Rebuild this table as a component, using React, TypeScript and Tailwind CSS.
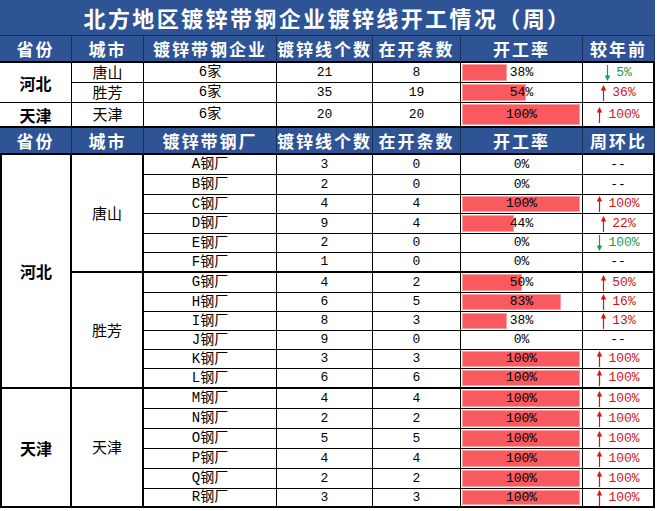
import React from "react";

type Dir = "up" | "down" | "none";

const CJK = "font-['Noto_Sans_CJK_SC',sans-serif]";
const MONO = "font-['Liberation_Mono','Noto_Sans_CJK_SC',monospace]";

function Arrow({ dir }: { dir: "up" | "down" }) {
  const color = dir === "up" ? "#e01010" : "#1f9a45";
  return (
    <svg width="7" height="16" viewBox="0 0 7 16" className="mr-[5px]">
      {dir === "up" ? (
        <>
          <line x1="3.5" y1="3" x2="3.5" y2="16" stroke={color} strokeWidth="1.2" />
          <polygon points="0.8,5.5 3.5,0 6.2,5.5" fill={color} />
        </>
      ) : (
        <>
          <line x1="3.5" y1="0" x2="3.5" y2="13" stroke={color} strokeWidth="1.2" />
          <polygon points="0.8,10.5 3.5,16 6.2,10.5" fill={color} />
        </>
      )}
    </svg>
  );
}

const cellBase = "flex items-center justify-center border-r border-black";

function Hdr({ children, last }: { children: React.ReactNode; last?: boolean }) {
  return (
    <div
      className={`flex items-center justify-center bg-[#2f5496] text-white font-bold text-[17px] tracking-[2px] ${CJK} border-b-2 border-black ${
        last ? "border-r border-r-[#1f3864]" : "border-r border-r-[#1c2f57]"
      }`}
    >
      {children}
    </div>
  );
}

function Rate({ pct, bottom }: { pct: number; bottom: string }) {
  const w = Math.min(118, Math.round(pct * 1.19));
  return (
    <div className={`relative ${cellBase} ${bottom}`}>
      {pct > 0 && (
        <div
          className="absolute left-[1px] top-[1px] bottom-[1px] bg-[#f95a5f] border border-[#ff9c9c]"
          style={{ width: `${w}px` }}
        />
      )}
      <span className={`relative text-[13px] text-black ${MONO}`}>{pct}%</span>
    </div>
  );
}

function Chg({ dir, val, bottom }: { dir: Dir; val: string; bottom: string }) {
  return (
    <div className={`${cellBase} border-r-2 ${bottom}`}>
      {dir === "none" ? (
        <span className={`text-[13px] text-black ${MONO}`}>--</span>
      ) : (
        <span className="flex items-center">
          <Arrow dir={dir} />
          <span
            className={`text-[13px] ${MONO} ${dir === "up" ? "text-[#d01515]" : "text-[#1f9a45]"}`}
          >
            {val}
          </span>
        </span>
      )}
    </div>
  );
}

type Row = { name: string; lines: number; open: number; pct: number; dir: Dir; val: string };

const rows2: Row[] = [
  { name: "A钢厂", lines: 3, open: 0, pct: 0, dir: "none", val: "" },
  { name: "B钢厂", lines: 2, open: 0, pct: 0, dir: "none", val: "" },
  { name: "C钢厂", lines: 4, open: 4, pct: 100, dir: "up", val: "100%" },
  { name: "D钢厂", lines: 9, open: 4, pct: 44, dir: "up", val: "22%" },
  { name: "E钢厂", lines: 2, open: 0, pct: 0, dir: "down", val: "100%" },
  { name: "F钢厂", lines: 1, open: 0, pct: 0, dir: "none", val: "" },
  { name: "G钢厂", lines: 4, open: 2, pct: 50, dir: "up", val: "50%" },
  { name: "H钢厂", lines: 6, open: 5, pct: 83, dir: "up", val: "16%" },
  { name: "I钢厂", lines: 8, open: 3, pct: 38, dir: "up", val: "13%" },
  { name: "J钢厂", lines: 9, open: 0, pct: 0, dir: "none", val: "" },
  { name: "K钢厂", lines: 3, open: 3, pct: 100, dir: "up", val: "100%" },
  { name: "L钢厂", lines: 6, open: 6, pct: 100, dir: "up", val: "100%" },
  { name: "M钢厂", lines: 4, open: 4, pct: 100, dir: "up", val: "100%" },
  { name: "N钢厂", lines: 2, open: 2, pct: 100, dir: "up", val: "100%" },
  { name: "O钢厂", lines: 5, open: 5, pct: 100, dir: "up", val: "100%" },
  { name: "P钢厂", lines: 4, open: 4, pct: 100, dir: "up", val: "100%" },
  { name: "Q钢厂", lines: 2, open: 2, pct: 100, dir: "up", val: "100%" },
  { name: "R钢厂", lines: 3, open: 3, pct: 100, dir: "up", val: "100%" },
];

function DataRow({ r, thick }: { r: Row; thick: boolean }) {
  const bottom = thick ? "border-b-2" : "border-b";
  return (
    <>
      <div className={`${cellBase} ${bottom} text-[14px] text-black ${MONO}`}>{r.name}</div>
      <div className={`${cellBase} ${bottom} text-[13px] text-black ${MONO}`}>{r.lines}</div>
      <div className={`${cellBase} ${bottom} text-[13px] text-black ${MONO}`}>{r.open}</div>
      <Rate pct={r.pct} bottom={bottom} />
      <Chg dir={r.dir} val={r.val} bottom={bottom} />
    </>
  );
}

export default function App() {
  const cityText = `text-[15px] text-black ${CJK}`;
  const provText = `text-[16px] font-bold text-black ${CJK}`;
  return (
    <div className="w-[657px] h-[511px] bg-white">
      <div className="w-[655px] grid grid-cols-[72px_72px_133px_96px_88px_122px_72px] grid-rows-[36px_27px_20px_20px_25px_27px_20px_20px_19px_20px_19px_20px_20px_19px_19px_19px_19px_20px_20px_20px_20px_20px_20px_19px]">
        {/* Title */}
        <div
          className={`col-span-7 flex items-center justify-center bg-[#2f5496] text-white text-[22px] font-bold tracking-[2.4px] ${CJK} border-b border-[#1c2f57]`}
        >
          北方地区镀锌带钢企业镀锌线开工情况（周）
        </div>

        {/* Header 1 */}
        <Hdr>省份</Hdr>
        <Hdr>城市</Hdr>
        <Hdr>镀锌带钢企业</Hdr>
        <Hdr>镀锌线个数</Hdr>
        <Hdr>在开条数</Hdr>
        <Hdr>开工率</Hdr>
        <Hdr last>较年前</Hdr>

        {/* Section 1 */}
        <div className={`row-span-2 ${cellBase} border-b ${provText}`}>河北</div>
        <div className={`${cellBase} border-b ${cityText}`}>唐山</div>
        <div className={`${cellBase} border-b text-[14px] ${MONO}`}>6家</div>
        <div className={`${cellBase} border-b text-[13px] ${MONO}`}>21</div>
        <div className={`${cellBase} border-b text-[13px] ${MONO}`}>8</div>
        <Rate pct={38} bottom="border-b" />
        <Chg dir="down" val="5%" bottom="border-b" />

        <div className={`${cellBase} border-b ${cityText}`}>胜芳</div>
        <div className={`${cellBase} border-b text-[14px] ${MONO}`}>6家</div>
        <div className={`${cellBase} border-b text-[13px] ${MONO}`}>35</div>
        <div className={`${cellBase} border-b text-[13px] ${MONO}`}>19</div>
        <Rate pct={54} bottom="border-b" />
        <Chg dir="up" val="36%" bottom="border-b" />

        <div className={`${cellBase} border-b-2 ${provText}`}>天津</div>
        <div className={`${cellBase} border-b-2 ${cityText}`}>天津</div>
        <div className={`${cellBase} border-b-2 text-[14px] ${MONO}`}>6家</div>
        <div className={`${cellBase} border-b-2 text-[13px] ${MONO}`}>20</div>
        <div className={`${cellBase} border-b-2 text-[13px] ${MONO}`}>20</div>
        <Rate pct={100} bottom="border-b-2" />
        <Chg dir="up" val="100%" bottom="border-b-2" />

        {/* Header 2 */}
        <Hdr>省份</Hdr>
        <Hdr>城市</Hdr>
        <Hdr>镀锌带钢厂</Hdr>
        <Hdr>镀锌线个数</Hdr>
        <Hdr>在开条数</Hdr>
        <Hdr>开工率</Hdr>
        <Hdr last>周环比</Hdr>

        {/* Section 2 */}
        {rows2.map((r, i) => {
          const thick = i === 5 || i === 11 || i === 17;
          return (
            <React.Fragment key={r.name}>
              {i === 0 && (
                <div className={`row-span-12 ${cellBase} border-l-2 border-r-2 border-b-2 ${provText}`}>
                  河北
                </div>
              )}
              {i === 12 && (
                <div className={`row-span-6 ${cellBase} border-l-2 border-r-2 border-b-2 ${provText}`}>
                  天津
                </div>
              )}
              {(i === 0 || i === 6 || i === 12) && (
                <div className={`row-span-6 ${cellBase} border-r-2 border-b-2 ${cityText}`}>
                  {i === 0 ? "唐山" : i === 6 ? "胜芳" : "天津"}
                </div>
              )}
              <DataRow r={r} thick={thick} />
            </React.Fragment>
          );
        })}
      </div>
    </div>
  );
}
